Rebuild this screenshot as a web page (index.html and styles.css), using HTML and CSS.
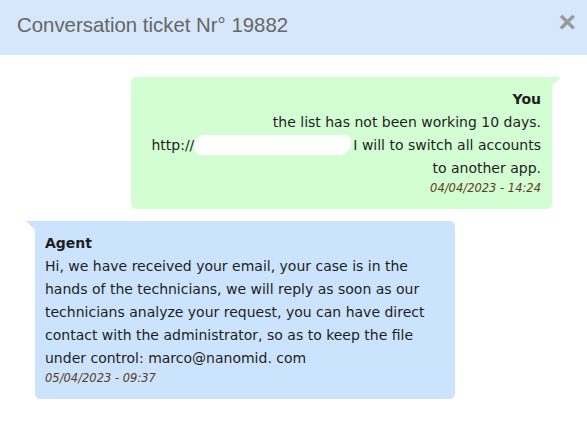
FILE: index.html
```html
<!DOCTYPE html>
<html lang="en">
<head>
    <meta charset="UTF-8">
    <meta name="viewport" content="width=device-width, initial-scale=1.0">
    <title>Conversation ticket</title>
    <link rel="stylesheet" href="styles.css">
</head>
<body>
    <div class="modal">
        <!-- Cabeçalho -->
        <div class="modal-header">
            <h2>Conversation ticket Nr° 19882</h2>
            <span class="close">&times;</span>
        </div>

        <!-- Mensagens -->
        <div class="messages">
            <div class="msg msg-you">
                <div class="author">You</div>
                <div class="text">
                    the list has not been working 10 days.<br>
                    http://<span class="hidden-url"></span>I will to switch all accounts<br>
                    to another app.
                </div>
                <div class="date">04/04/2023 - 14:24</div>
            </div>

            <div class="msg msg-agent">
                <div class="author">Agent</div>
                <div class="text">
                    Hi, we have received your email, your case is in the hands of the technicians, we will reply as soon as our technicians analyze your request, you can have direct contact with the administrator, so as to keep the file under control: marco@nanomid. com
                </div>
                <div class="date">05/04/2023 - 09:37</div>
            </div>
        </div>
    </div>
</body>
</html>
```

FILE: styles.css
```css
body {
    margin: 0;
    background-color: #fff;
    font-family: "DejaVu Sans", Verdana, sans-serif;
    color: #1e1e1e;
}

.modal-header {
    display: flex;
    justify-content: space-between;
    align-items: center;
    height: 51px;
    padding: 0 11px 4px 17px;
    background-color: #d6e6fb;
}

.modal-header h2 {
    margin: 0;
    font-family: "Liberation Sans", Arial, sans-serif;
    font-size: 20.4px;
    font-weight: normal;
    color: #666;
}

.close {
    font-family: "Liberation Sans", Arial, sans-serif;
    font-size: 30px;
    font-weight: bold;
    line-height: 1;
    color: #999;
    margin-top: -8px;
    cursor: pointer;
}

.messages {
    display: flex;
    flex-direction: column;
    gap: 12px;
    padding: 22px 35px;
}

.msg {
    position: relative;
    width: 400px;
    padding: 10px 10px 12px 10px;
    border-radius: 5px;
    font-size: 14px;
}

.msg .author {
    font-weight: bold;
    line-height: 24px;
}

.msg .text {
    line-height: 23px;
}

.msg .date {
    font-size: 11.5px;
    font-style: italic;
    line-height: 17px;
    color: #5e3b1c;
}

.msg-you {
    align-self: flex-end;
    text-align: right;
    background-color: #d3fdd3;
    border-top-right-radius: 0;
    padding-right: 11px;
}

.msg-you::after {
    content: "";
    position: absolute;
    top: 0;
    right: -9px;
    border-top: 9px solid #d3fdd3;
    border-right: 9px solid transparent;
}

.msg-agent {
    align-self: flex-start;
    background-color: #cce3fd;
    border-top-left-radius: 0;
}

.msg-agent::before {
    content: "";
    position: absolute;
    top: 0;
    left: -9px;
    border-top: 9px solid #cce3fd;
    border-left: 9px solid transparent;
}

.hidden-url {
    display: inline-block;
    width: 157px;
    height: 20px;
    margin-right: 2px;
    vertical-align: -5px;
    background-color: #fff;
    border-radius: 10px 6px 12px 8px;
}
```
